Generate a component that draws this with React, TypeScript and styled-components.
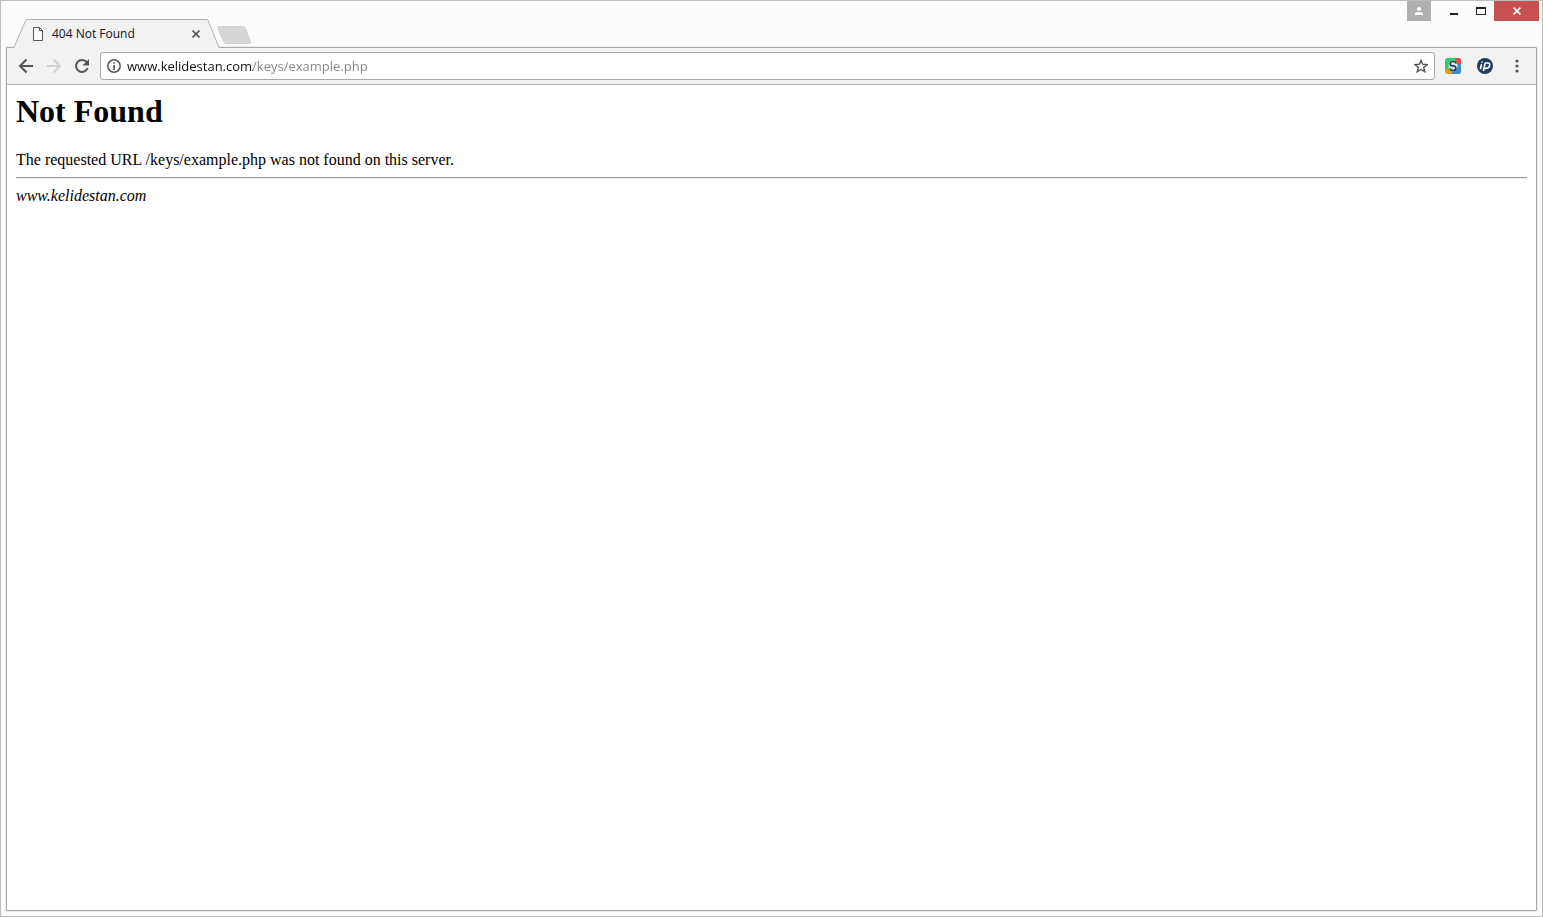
import React from "react";
import styled, { createGlobalStyle } from "styled-components";

const GlobalStyle = createGlobalStyle`
  *, *::before, *::after { box-sizing: border-box; }
  body { margin: 0; background: #fcfcfc; }
`;

const BrowserWindow = styled.div`
  display: flex;
  flex-direction: column;
  min-height: 100vh;
  padding: 0 5px 5px;
  border: 1px solid #bdbdbd;
  background: #fcfcfc;
  font-family: "Open Sans", "Noto Sans", sans-serif;
`;

const TitleBar = styled.header`
  display: flex;
  justify-content: space-between;
  height: 46px;
  margin-right: -2px;
`;

const TabStrip = styled.div`
  display: flex;
  align-items: flex-end;
  padding-left: 7px;
`;

const Tab = styled.div`
  display: flex;
  position: relative;
  z-index: 1;
  height: 29px;
  margin-bottom: -1px;
`;

const TabBody = styled.div`
  display: flex;
  align-items: center;
  width: 180px;
  padding: 0 5px;
  border-top: 1px solid #b0b0b0;
  background: #f2f2f2;
`;

const TabTitle = styled.span`
  flex: 1;
  padding-left: 8px;
  font-size: 12px;
  line-height: 16px;
  color: #111;
  white-space: nowrap;
`;

const IconButton = styled.button<{ $width: number; $height: number }>`
  display: flex;
  flex: none;
  align-items: center;
  justify-content: center;
  width: ${(p) => p.$width}px;
  height: ${(p) => p.$height}px;
  padding: 0;
  border: 0;
  background: transparent;
`;

const NewTabButton = styled(IconButton)`
  margin: 0 0 3px -3px;
`;

const WindowControls = styled.div`
  display: flex;
  align-items: flex-start;
`;

const ProfileButton = styled(IconButton)`
  margin-right: 9px;
  background: #b0b0b0;
`;

const CloseButton = styled(IconButton)`
  background: #c75050;
`;

const Frame = styled.div`
  display: flex;
  flex: 1;
  flex-direction: column;
  border: 1px solid #a9a9a9;
  border-radius: 1px;
  background: #fff;
  box-shadow: 0 0 0 1px #ececec;
`;

const Toolbar = styled.nav`
  display: flex;
  align-items: center;
  height: 37px;
  padding: 0 3px 0 5px;
  border-bottom: 1px solid #b3b3b3;
  background: #f2f2f2;
`;

const AddressBar = styled.form`
  display: flex;
  flex: 1;
  align-items: center;
  height: 28px;
  margin: 0 2px 0 4px;
  border: 1px solid #a9a9a9;
  border-radius: 3px;
  background: #fff;
`;

const AddressInput = styled.input`
  flex: 1;
  min-width: 0;
  height: 20px;
  padding: 0;
  border: 0;
  outline: 0;
  font-family: inherit;
  font-size: 13px;
  line-height: 20px;
  color: #111;
  background: linear-gradient(to right, #111 126px, #858585 126px);
  background-clip: text;
  -webkit-background-clip: text;
  -webkit-text-fill-color: transparent;
`;

const Page = styled.main`
  padding: 8px 9px;
  font-family: "Liberation Serif", "Times New Roman", serif;
  font-size: 16px;
  line-height: 18px;
  color: #000;
`;

const Heading = styled.h1`
  margin: 0 0 22px;
  font-size: 32px;
  line-height: 36px;
`;

const Message = styled.p`
  margin: 0;
`;

const Divider = styled.hr`
  height: 2px;
  margin: 8px 0;
  border: 0;
  border-top: 1px solid #9a9a9a;
  border-bottom: 1px solid #eee;
`;

const Address = styled.address`
  font-style: italic;
`;

const BackArrow = ({ color }: { color: string }) => (
  <svg width="16" height="16" viewBox="0 0 16 16" fill="none" stroke={color} strokeWidth="2">
    <path d="M15 8H2.5M8.5 1.5L2 8l6.500 6.500" />
  </svg>
);

const ForwardArrow = ({ color }: { color: string }) => (
  <svg width="16" height="16" viewBox="0 0 16 16" fill="none" stroke={color} strokeWidth="2">
    <path d="M1 8h12.500M7.500 1.500L14 8l-6.500 6.500" />
  </svg>
);

export default function App() {
  return (
    <BrowserWindow>
      <GlobalStyle />
      <TitleBar>
        <TabStrip>
          <Tab>
            <svg width="14" height="29" viewBox="0 0 14 29">
              <path d="M0 29L1 28.500L13 1.500L14 0.500V29z" fill="#f2f2f2" />
              <path d="M0 28.500H1L12.500 2Q13 .5 14 .5" fill="none" stroke="#b0b0b0" />
            </svg>
            <TabBody>
              <svg width="12" height="14" viewBox="0 0 12 14" fill="#fafafa" stroke="#555">
                <path d="M1.500.5h6l3 3v10h-9zM7.500.5v3h3" />
              </svg>
              <TabTitle>404 Not Found</TabTitle>
              <IconButton $width={12} $height={16} type="button" aria-label="Close tab">
                <svg width="8" height="8" viewBox="0 0 8 8" stroke="#5a5a5a" strokeWidth="1.600">
                  <path d="M.5.5l7 7M7.500.5l-7 7" />
                </svg>
              </IconButton>
            </TabBody>
            <svg width="13" height="29" viewBox="0 0 13 29">
              <path d="M0 .5L1 2L12 28.500L13 29H0z" fill="#f2f2f2" />
              <path d="M0 .5Q.8 .7 1.300 2L12 28.500H13" fill="none" stroke="#b0b0b0" />
            </svg>
          </Tab>
          <NewTabButton $width={35} $height={18} type="button" aria-label="New tab">
            <svg width="35" height="18" viewBox="0 0 35 18">
              <path d="M2 .5H25.500Q27.500.5 28.500 2.500L33.500 15.500Q34.200 17.500 32.500 17.500H9.500Q7.500 17.500 6.500 15.500L1 2.500Q.2.500 2 .5z" fill="#d7d7d7" stroke="#d0d0d0" />
            </svg>
          </NewTabButton>
        </TabStrip>
        <WindowControls>
          <ProfileButton $width={24} $height={20} type="button" aria-label="Profile">
            <svg width="10" height="10" viewBox="0 0 10 10" fill="#fff">
              <circle cx="5" cy="3" r="2" />
              <path d="M1 9V8Q1 6 5 6T9 8V9z" />
            </svg>
          </ProfileButton>
          <IconButton $width={27} $height={20} type="button" aria-label="Minimize">
            <svg width="8" height="10" viewBox="0 0 8 10">
              <path d="M0 7h8v2H0z" fill="#222" />
            </svg>
          </IconButton>
          <IconButton $width={27} $height={20} type="button" aria-label="Maximize">
            <svg width="10" height="8" viewBox="0 0 10 8">
              <path d="M0 0h10v8H0zM1 2v5h8V2z" fill="#222" fillRule="evenodd" />
            </svg>
          </IconButton>
          <CloseButton $width={45} $height={20} type="button" aria-label="Close window">
            <svg width="8" height="8" viewBox="0 0 8 8" stroke="#fff" strokeWidth="1.600">
              <path d="M.6.6l6.800 6.800M7.400.6L.6 7.400" />
            </svg>
          </CloseButton>
        </WindowControls>
      </TitleBar>
      <Frame>
        <Toolbar>
          <IconButton $width={28} $height={28} type="button" aria-label="Back">
            <BackArrow color="#555" />
          </IconButton>
          <IconButton $width={28} $height={28} type="button" aria-label="Forward" disabled>
            <ForwardArrow color="#d0d0d0" />
          </IconButton>
          <IconButton $width={28} $height={28} type="button" aria-label="Reload">
            <svg width="16" height="16" viewBox="0 0 16 16">
              <path d="M12.800 4.200A6 6 0 1 0 13.700 10" fill="none" stroke="#555" strokeWidth="2" />
              <path d="M15 1v6.500H8.500z" fill="#555" />
            </svg>
          </IconButton>
          <AddressBar>
            <IconButton $width={26} $height={26} type="button" aria-label="Site information">
              <svg width="14" height="14" viewBox="0 0 14 14">
                <circle cx="7" cy="7" r="6.200" fill="none" stroke="#555" strokeWidth="1.500" />
                <path d="M6.200 3.200h1.700v1.600H6.200zM6.200 6h1.700v5H6.200z" fill="#555" />
              </svg>
            </IconButton>
            <AddressInput aria-label="Address" defaultValue="www.kelidestan.com/keys/example.php" />
            <IconButton $width={26} $height={26} type="button" aria-label="Bookmark this page">
              <svg width="14" height="14" viewBox="0 0 14 14" fill="none" stroke="#555" strokeWidth="1.400">
                <path d="M7 1.400L8.600 5.200L13 5.600L9.700 8.400L10.800 12.800L7 10.500L3.200 12.800L4.300 8.400L1 5.600L5.400 5.200z" />
              </svg>
            </IconButton>
          </AddressBar>
          <IconButton $width={32} $height={28} type="button" aria-label="S extension">
            <svg width="16" height="16" viewBox="0 0 16 16">
              <path d="M2.500 0H10V5L5 11H0V2.500Q0 0 2.500 0z" fill="#2ecc71" />
              <path d="M10 0h3.500Q16 0 16 2.500V6H10z" fill="#e74c3c" />
              <path d="M16 6v7.500Q16 16 13.500 16H7V10l4-4z" fill="#3590d0" />
              <path d="M0 11h7v5H2.500Q0 16 0 13.500z" fill="#f39c12" />
              <ellipse cx="8" cy="8" rx="4.500" ry="5.500" fill="#e4f2f2" />
              <path d="M11 5.600Q10.500 3.500 8 3.500T5.200 5.600T8 7.900T10.900 10.300T8 12.500T5 10.400" fill="none" stroke="#253b56" strokeWidth="1.700" />
            </svg>
          </IconButton>
          <IconButton $width={32} $height={28} type="button" aria-label="IP extension">
            <svg width="16" height="16" viewBox="0 0 16 16">
              <circle cx="8" cy="8" r="8" fill="#223f60" />
              <path d="M4.600 6L3.400 11.200M5.300 3.500L5.100 4.700M8.200 4.800L6.400 13M8.200 5H10.800Q13.200 5 12.600 7.600T9.300 10.400H7.300" fill="none" stroke="#fff" strokeWidth="1.600" />
            </svg>
          </IconButton>
          <IconButton $width={32} $height={28} type="button" aria-label="Menu">
            <svg width="4" height="14" viewBox="0 0 4 14" fill="#555">
              <circle cx="2" cy="2" r="1.600" />
              <circle cx="2" cy="7" r="1.600" />
              <circle cx="2" cy="12" r="1.600" />
            </svg>
          </IconButton>
        </Toolbar>
        <Page>
          <Heading>Not Found</Heading>
          <Message>The requested URL /keys/example.php was not found on this server.</Message>
          <Divider />
          <Address>www.kelidestan.com</Address>
        </Page>
      </Frame>
    </BrowserWindow>
  );
}
